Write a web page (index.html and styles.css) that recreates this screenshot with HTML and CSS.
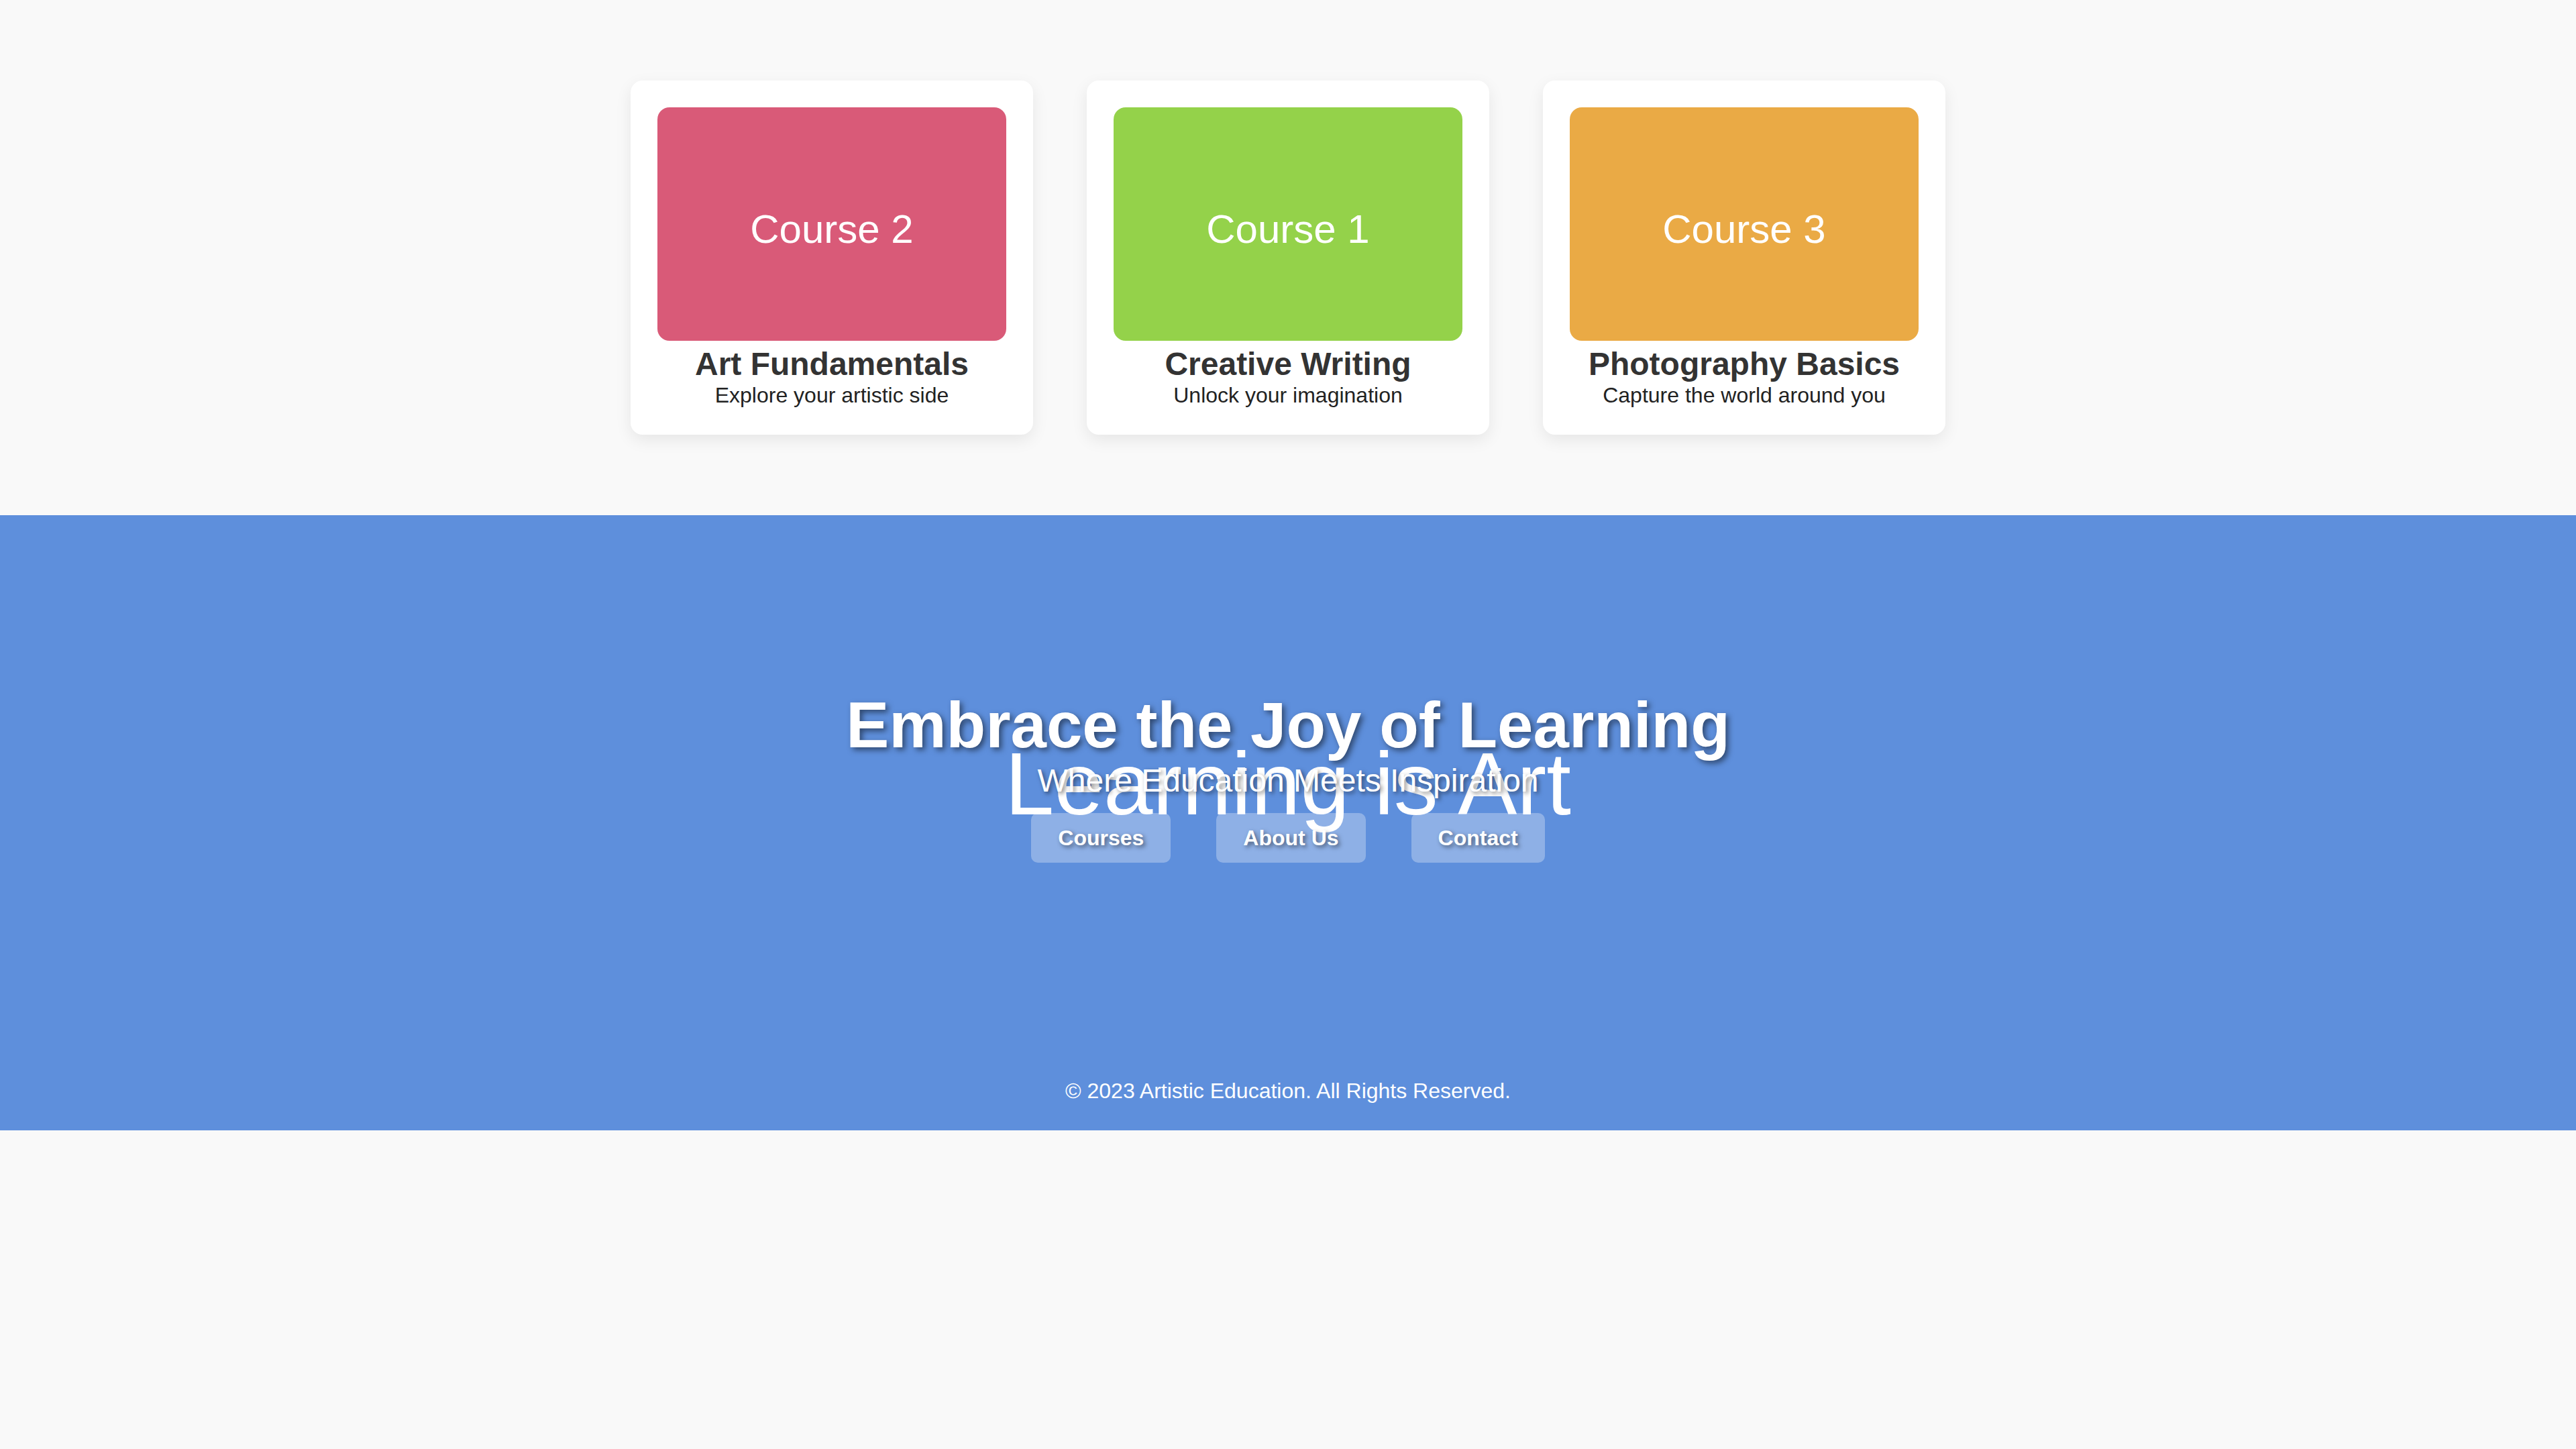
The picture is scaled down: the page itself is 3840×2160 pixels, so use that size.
FILE: index.html
```html
<!DOCTYPE html>
<html lang="en">
<head>
<meta charset="utf-8">
<title>Artistic Education</title>
<link rel="stylesheet" href="styles.css">
</head>
<body>
<section class="courses">
  <div class="card">
    <div class="thumb thumb-pink">Course 2</div>
    <h3 class="card-title">Art Fundamentals</h3>
    <p class="card-text">Explore your artistic side</p>
  </div>
  <div class="card">
    <div class="thumb thumb-green">Course 1</div>
    <h3 class="card-title">Creative Writing</h3>
    <p class="card-text">Unlock your imagination</p>
  </div>
  <div class="card">
    <div class="thumb thumb-orange">Course 3</div>
    <h3 class="card-title">Photography Basics</h3>
    <p class="card-text">Capture the world around you</p>
  </div>
</section>
<section class="hero">
  <div class="hero-bg-text">Learning is Art</div>
  <h1 class="hero-title">Embrace the Joy of Learning</h1>
  <p class="hero-sub">Where Education Meets Inspiration</p>
  <nav class="hero-nav">
    <a class="btn" href="#">Courses</a>
    <a class="btn" href="#">About Us</a>
    <a class="btn" href="#">Contact</a>
  </nav>
</section>
<footer class="footer">© 2023 Artistic Education. All Rights Reserved.</footer>
</body>
</html>
```
FILE: styles.css
```css
html, body {
  margin: 0;
  padding: 0;
}
body {
  background: #f9f9f9;
  font-family: "Liberation Sans", Arial, sans-serif;
  color: #333;
  min-height: 2160px;
}
.courses {
  display: flex;
  justify-content: center;
  gap: 80px;
  padding: 120px 0;
}
.card {
  width: 600px;
  box-sizing: border-box;
  background: #fff;
  border-radius: 18px;
  padding: 40px;
  box-shadow: 0 8px 24px rgba(0, 0, 0, 0.08);
  text-align: center;
}
.thumb {
  height: 348px;
  border-radius: 18px;
  display: flex;
  align-items: center;
  justify-content: center;
  color: #fff;
  font-size: 60px;
  padding-top: 14px;
  box-sizing: border-box;
}
.thumb-pink { background: #d95a78; }
.thumb-green { background: #94d24a; }
.thumb-orange { background: #eaaa45; }
.card-title {
  margin: 7px 0 0;
  font-size: 48px;
  line-height: 55px;
  font-weight: bold;
  color: #333;
}
.card-text {
  margin: 1px 0 0;
  font-size: 32px;
  line-height: 37px;
  color: #222;
}
.hero {
  position: relative;
  height: 800px;
  background: #5e8fdc;
  color: #fff;
  display: flex;
  flex-direction: column;
  align-items: center;
  justify-content: center;
  text-align: center;
}
.hero-bg-text {
  position: absolute;
  left: 0;
  right: 0;
  top: 50%;
  transform: translateY(-50%);
  font-size: 132px;
  line-height: 147px;
  color: #fff;
  z-index: 0;
}
.hero-title {
  position: relative;
  z-index: 1;
  margin: 0;
  font-size: 96px;
  line-height: 110px;
  font-weight: bold;
  text-shadow: 4px 4px 8px rgba(0, 0, 0, 0.5);
}
.hero-sub {
  position: relative;
  z-index: 1;
  margin: 0;
  font-size: 48px;
  line-height: 56px;
  text-shadow: 3px 3px 6px rgba(0, 0, 0, 0.5);
}
.hero-nav {
  position: relative;
  z-index: 1;
  display: flex;
  gap: 68px;
  margin: 20px 0 24px;
}
.btn {
  display: block;
  height: 74px;
  line-height: 74px;
  padding: 0 40px;
  border-radius: 10px;
  background: rgba(255, 255, 255, 0.3);
  color: #fff;
  font-size: 32px;
  font-weight: bold;
  text-decoration: none;
  text-shadow: 3px 3px 6px rgba(0, 0, 0, 0.5);
}
.footer {
  background: #5e8fdc;
  color: #fff;
  text-align: center;
  font-size: 32px;
  line-height: 37px;
  padding: 40px 0 40px;
}
```
